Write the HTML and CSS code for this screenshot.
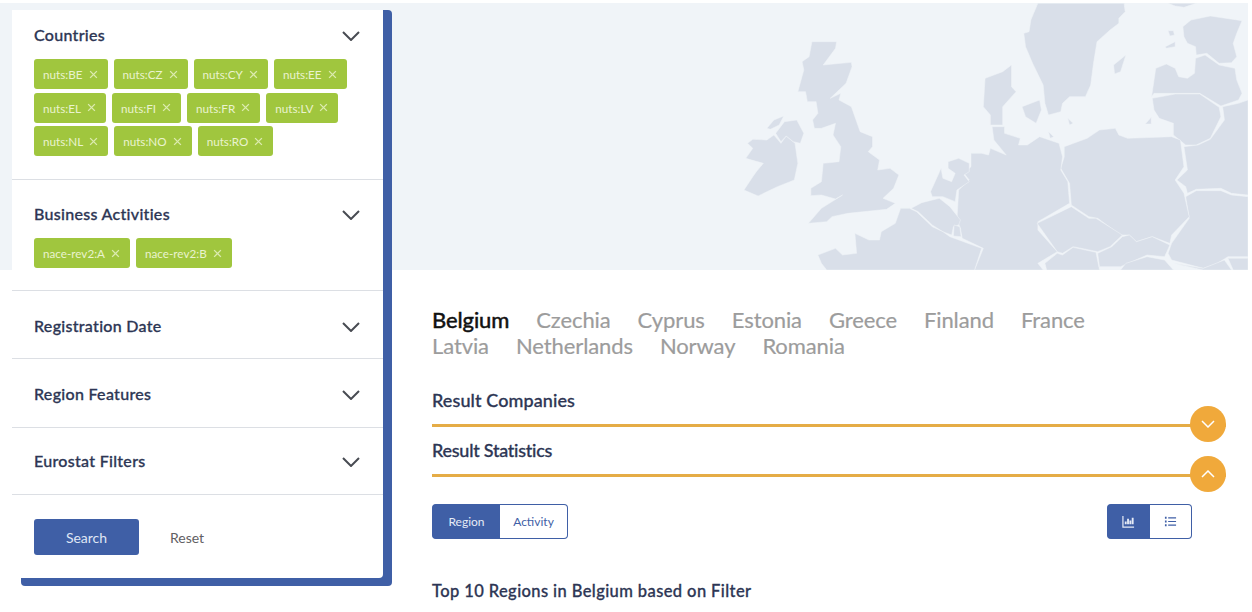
FILE: index.html

```html
<!DOCTYPE html>
<html lang="en">
<head>
  <meta charset="UTF-8" />
  <meta name="viewport" content="width=device-width, initial-scale=1.0" />
  <title>Company Search</title>
  <link rel="stylesheet" href="styles.css">
</head>
<body>
  <div class="page">
    <div class="hero">
      <svg class="map" viewBox="0 9 1557 801" preserveAspectRatio="none" aria-hidden="true">
        <g class="land">
          <polygon points="960,10 1205,10 1208,35 1190,55 1190,70 1165,90 1128,125 1118,190 1110,255 1095,290 1050,290 1030,310 1025,335 990,345 980,310 975,255 945,190 925,140 920,100 935,95 940,60" />
          <polygon points="1330,10 1410,10 1375,22 1350,18" />
          <polygon points="1372,80 1395,60 1450,48 1540,62 1525,100 1515,130 1525,170 1510,188 1475,190 1440,160 1410,165 1408,140 1385,130 1375,110" />
          <polygon points="1283,290 1295,205 1325,192 1350,205 1360,230 1385,235 1405,220 1408,175 1435,165 1475,195 1520,205 1525,240 1540,280 1530,300 1480,318 1420,280 1290,280" />
          <polygon points="1285,295 1350,282 1420,282 1475,322 1480,350 1450,415 1410,435 1380,435 1345,405 1345,370 1305,355 1290,330" />
          <polygon points="1557,300 1557,585 1510,580 1480,565 1410,568 1385,580 1380,560 1355,540 1385,510 1375,440 1415,435 1450,418 1490,360 1485,320 1530,310" />
          <polygon points="1557,590 1557,770 1500,770 1470,790 1430,805 1340,780 1330,760 1340,730 1390,655 1380,590 1410,572 1480,572 1510,585" />
          <polygon points="1035,440 1100,415 1135,390 1180,385 1190,405 1215,415 1340,410 1365,420 1375,500 1350,540 1375,580 1390,650 1340,705 1335,730 1285,710 1240,725 1220,705 1195,705 1130,655 1105,650 1055,615 1050,550 1025,505 1035,470" />
          <polygon points="770,460 800,460 820,465 825,445 870,465 835,420 830,380 865,380 865,400 910,415 905,435 930,435 965,410 1020,430 1030,470 1025,510 1045,545 1050,610 960,665 960,690 1015,755 960,790 975,810 780,810 805,745 745,715 740,685 730,660 735,570 765,540 750,520 770,500" />
          <polygon points="810,235 860,215 885,195 885,260 898,275 860,320 860,375 825,375 825,345 805,320" />
          <polygon points="915,320 965,300 970,330 955,370 925,350" />
          <polygon points="1045,355 1060,370 1050,375" />
          <polygon points="990,395 1005,410 995,415" />
          <polygon points="1265,372 1282,352 1282,372" />
          <polygon points="1175,195 1210,165 1195,215 1178,222" />
          <polygon points="1322,140 1350,125 1350,140 1325,145" />
          <polygon points="1330,92 1345,92 1348,105 1335,108" />
          <polygon points="655,575 685,505 690,535 715,545 725,520 705,505 705,485 735,475 765,490 765,515 750,525 765,545 730,570 725,605 690,590 660,590" />
          <polygon points="600,625 630,608 680,595 710,620 740,660 735,675 720,680 715,705 690,695 660,675 620,635" />
          <polygon points="722,675 738,680 742,710 720,708" />
          <polygon points="335,765 385,745 405,765 445,760 440,700 480,720 510,720 515,695 555,670 570,625 595,625 615,635 660,680 690,695 710,710 800,745 780,810 360,810 345,790" />
          <polygon points="958,670 1055,620 1105,655 1125,655 1200,705 1165,740 1130,755 1060,740 1030,760 1015,755" />
          <polygon points="1130,760 1170,740 1200,710 1220,705 1240,725 1285,710 1335,735 1320,770 1270,765 1195,800 1135,800" />
          <polygon points="980,790 1015,760 1030,765 1060,742 1125,757 1135,810 985,810" />
          <polygon points="1195,810 1210,790 1270,770 1320,780 1345,810" />
          <polygon points="1345,790 1430,810 1510,810 1490,780 1430,805" />
          <polygon points="1500,775 1557,775 1557,810 1515,810" />
          <polygon points="130,475 150,445 135,430 150,418 190,420 210,405 230,430 245,408 270,430 278,490 268,540 220,560 165,588 125,570 150,530 160,515 180,490" />
          <polygon points="215,400 240,365 275,360 295,400 285,430 265,425 245,408 230,425" />
          <polygon points="190,385 210,360 238,348 225,375 200,388" />
          <polygon points="318,125 388,125 385,145 350,195 430,187 432,200 415,250 370,295 400,280 395,300 430,320 445,365 455,395 490,410 490,440 478,455 510,480 505,510 540,505 565,525 550,565 520,595 555,610 530,628 420,640 375,650 360,665 308,670 345,625 405,585 385,597 345,585 315,587 315,565 345,545 350,490 395,485 400,440 378,405 385,370 345,385 325,385 320,360 335,340 330,305 305,305 300,275 278,275 295,210 290,185 310,170" />
        </g>
      </svg>
    </div>

    <aside class="panel-wrap">
      <div class="panel">
        <section class="filter filter-countries">
          <div class="filter-head">
            <h3>Countries</h3>
            <svg class="chev" viewBox="0 0 18 10"><path d="M1 1l8 8 8-8" /></svg>
          </div>
          <div class="tags">
            <span class="tag">nuts:BE <svg viewBox="0 0 8 8"><path d="M1 1l6 6M7 1l-6 6" /></svg></span>
            <span class="tag">nuts:CZ <svg viewBox="0 0 8 8"><path d="M1 1l6 6M7 1l-6 6" /></svg></span>
            <span class="tag">nuts:CY <svg viewBox="0 0 8 8"><path d="M1 1l6 6M7 1l-6 6" /></svg></span>
            <span class="tag">nuts:EE <svg viewBox="0 0 8 8"><path d="M1 1l6 6M7 1l-6 6" /></svg></span>
            <span class="tag">nuts:EL <svg viewBox="0 0 8 8"><path d="M1 1l6 6M7 1l-6 6" /></svg></span>
            <span class="tag">nuts:FI <svg viewBox="0 0 8 8"><path d="M1 1l6 6M7 1l-6 6" /></svg></span>
            <span class="tag">nuts:FR <svg viewBox="0 0 8 8"><path d="M1 1l6 6M7 1l-6 6" /></svg></span>
            <span class="tag">nuts:LV <svg viewBox="0 0 8 8"><path d="M1 1l6 6M7 1l-6 6" /></svg></span>
            <span class="tag">nuts:NL <svg viewBox="0 0 8 8"><path d="M1 1l6 6M7 1l-6 6" /></svg></span>
            <span class="tag">nuts:NO <svg viewBox="0 0 8 8"><path d="M1 1l6 6M7 1l-6 6" /></svg></span>
            <span class="tag">nuts:RO <svg viewBox="0 0 8 8"><path d="M1 1l6 6M7 1l-6 6" /></svg></span>
          </div>
        </section>
        <section class="filter filter-business">
          <div class="filter-head">
            <h3>Business Activities</h3>
            <svg class="chev" viewBox="0 0 18 10"><path d="M1 1l8 8 8-8" /></svg>
          </div>
          <div class="tags">
            <span class="tag">nace-rev2:A <svg viewBox="0 0 8 8"><path d="M1 1l6 6M7 1l-6 6" /></svg></span>
            <span class="tag">nace-rev2:B <svg viewBox="0 0 8 8"><path d="M1 1l6 6M7 1l-6 6" /></svg></span>
          </div>
        </section>
        <section class="filter filter-date">
          <div class="filter-head">
            <h3>Registration Date</h3>
            <svg class="chev" viewBox="0 0 18 10"><path d="M1 1l8 8 8-8" /></svg>
          </div>
        </section>
        <section class="filter filter-region">
          <div class="filter-head">
            <h3>Region Features</h3>
            <svg class="chev" viewBox="0 0 18 10"><path d="M1 1l8 8 8-8" /></svg>
          </div>
        </section>
        <section class="filter filter-eurostat">
          <div class="filter-head">
            <h3>Eurostat Filters</h3>
            <svg class="chev" viewBox="0 0 18 10"><path d="M1 1l8 8 8-8" /></svg>
          </div>
        </section>
        <div class="panel-foot">
          <button class="btn-search" type="button">Search</button>
          <button class="btn-reset" type="button">Reset</button>
        </div>
      </div>
    </aside>

    <main class="results">
      <nav class="tabs">
        <a class="tab active">Belgium</a>
        <a class="tab">Czechia</a>
        <a class="tab">Cyprus</a>
        <a class="tab">Estonia</a>
        <a class="tab">Greece</a>
        <a class="tab">Finland</a>
        <a class="tab">France</a>
        <a class="tab">Latvia</a>
        <a class="tab">Netherlands</a>
        <a class="tab">Norway</a>
        <a class="tab">Romania</a>
      </nav>

      <div class="result-head result-first">
        <h2>Result Companies</h2>
        <span class="round-btn">
          <svg viewBox="0 0 14 8"><path d="M1 1l6 6 6-6" /></svg>
        </span>
      </div>
      <div class="result-head result-stats">
        <h2>Result Statistics</h2>
        <span class="round-btn">
          <svg viewBox="0 0 14 8"><path d="M1 7l6-6 6 6" /></svg>
        </span>
      </div>

      <div class="controls">
        <div class="toggle">
          <button class="toggle-item on" type="button">Region</button>
          <button class="toggle-item" type="button">Activity</button>
        </div>
        <div class="toggle toggle-icons">
          <button class="toggle-item on" type="button">
            <svg viewBox="0 0 14 14"><path d="M1 1v12h12" /><path class="bars" d="M4 10V7M6.5 10V4M9 10V6M11.5 10V3" /></svg>
          </button>
          <button class="toggle-item" type="button">
            <svg viewBox="0 0 14 14"><path class="bars" d="M1 3h1.8M1 7h1.8M1 11h1.8" /><path d="M4.5 3H13M4.5 7H13M4.5 11H13" /></svg>
          </button>
        </div>
      </div>

      <h4 class="top-title">Top 10 Regions in Belgium based on Filter</h4>
    </main>
  </div>
</body>
</html>
```

FILE: styles.css

```css
body {
  margin: 0;
  font-family: 'Lato', 'Open Sans', sans-serif;
  background: #fff;
  color: #2d3654;
}
h2, h3, h4 {
  margin: 0;
}
button {
  font-family: inherit;
  border: none;
  cursor: pointer;
}
.page {
  display: grid;
  grid-template-columns: 392px 1fr;
  grid-template-rows: 267px auto;
  padding: 3px 4px 0 0;
}

/* map strip behind the panel */
.hero {
  grid-column: 1 / 3;
  grid-row: 1;
  background: #f0f4f8;
  display: flex;
  justify-content: flex-end;
  overflow: hidden;
}
.map {
  width: 548px;
  height: 267px;
}
.land polygon {
  fill: #d9dfe9;
  stroke: #f0f4f8;
  stroke-width: 1.5;
  stroke-linejoin: round;
}

/* filter panel */
.panel-wrap {
  grid-column: 1;
  grid-row: 1 / 3;
  align-self: start;
  margin: 7px 0 0 21px;
  background: #3f5fa6;
  border-radius: 4px;
}
.panel {
  width: 371px;
  margin: 0 0 8px -9px;
  background: #fff;
  border-radius: 0 0 4px 0;
}
.filter {
  padding: 22px 23px 21px 22px;
  border-bottom: 1px solid #dcdfe4;
}
.filter-countries {
  padding-top: 13px;
  padding-bottom: 23px;
}
.filter-business {
  padding-bottom: 22px;
}
.filter-date {
  padding-top: 23px;
  padding-bottom: 20px;
}
.filter-region {
  padding-top: 23px;
}
.filter-eurostat {
  padding-top: 21px;
}
.filter-head {
  display: flex;
  justify-content: space-between;
  align-items: center;
}
.filter-head h3 {
  font-size: 16px;
  line-height: 24px;
  font-weight: 500;
  letter-spacing: 0.3px;
  color: #2d3654;
  -webkit-text-stroke: 0.3px #2d3654;
}
.chev {
  width: 18px;
  height: 10px;
  margin-top: 2px;
  fill: none;
  stroke: #484b52;
  stroke-width: 2;
}
.tags {
  display: flex;
  flex-wrap: wrap;
  gap: 3.5px 6px;
  margin-top: 12px;
}
.tag {
  display: flex;
  align-items: center;
  gap: 6px;
  height: 30px;
  padding: 0 10px 0 9px;
  border-radius: 3px;
  background: #a0c63e;
  color: #eaf3cf;
  font-size: 11.7px;
}
.tag svg {
  width: 9px;
  height: 9px;
  fill: none;
  stroke: #dcebb0;
  stroke-width: 1.2;
}
.panel-foot {
  display: flex;
  align-items: center;
  padding: 24px 22px 23px;
}
.btn-search {
  width: 105px;
  height: 36px;
  border-radius: 3px;
  background: #3f5fa6;
  color: #dfe6f5;
  font-size: 14px;
}
.btn-reset {
  margin-left: 31px;
  padding: 0;
  background: none;
  color: #5f6063;
  font-size: 14px;
}

/* results column */
.results {
  grid-column: 2;
  grid-row: 2;
  padding: 37px 22px 0 40px;
}
.tabs {
  display: flex;
  flex-wrap: wrap;
  gap: 0 27px;
  max-width: 700px;
}
.tab {
  font-size: 22px;
  line-height: 26px;
  letter-spacing: -0.1px;
  color: #9c9c9c;
  -webkit-text-stroke: 0.2px #9c9c9c;
}
.tab.active {
  color: #111;
  -webkit-text-stroke: 0.5px #111;
}
.result-head {
  position: relative;
  margin-top: 11px;
  padding-bottom: 12px;
  border-bottom: 3px solid #e5ac46;
}
.result-first {
  margin-top: 29px;
}
.result-head h2 {
  font-size: 18px;
  line-height: 24px;
  font-weight: 500;
  letter-spacing: 0.1px;
  color: #2d3654;
  -webkit-text-stroke: 0.3px #2d3654;
}
.result-stats h2 {
  letter-spacing: -0.25px;
}
.round-btn {
  position: absolute;
  right: 0;
  bottom: -18px;
  width: 36px;
  height: 36px;
  border-radius: 50%;
  background: #f0a93b;
  display: flex;
  align-items: center;
  justify-content: center;
}
.round-btn svg {
  width: 14px;
  height: 8px;
  fill: none;
  stroke: #fff;
  stroke-width: 1.5;
}
.controls {
  display: flex;
  justify-content: space-between;
  margin-top: 27px;
  padding-right: 34px;
}
.toggle {
  display: flex;
  height: 35px;
}
.toggle-item {
  width: 68px;
  padding: 0;
  background: #fff;
  border: 1px solid #3f5fa6;
  color: #3f5fa6;
  font-size: 12px;
  display: flex;
  align-items: center;
  justify-content: center;
}
.toggle-item:first-child {
  border-radius: 4px 0 0 4px;
  border-right: none;
}
.toggle-item:last-child {
  border-radius: 0 4px 4px 0;
  border-left: none;
}
.toggle-item.on {
  background: #3f5fa6;
  color: #e6ebf6;
}
.toggle-icons .toggle-item {
  width: 42.5px;
}
.toggle-icons svg {
  width: 13px;
  height: 13px;
  fill: none;
  stroke: currentColor;
  stroke-width: 1.3;
}
.toggle-icons .bars {
  stroke-width: 2;
}
.top-title {
  margin-top: 41px;
  font-size: 16.5px;
  line-height: 22px;
  font-weight: 500;
  letter-spacing: 0.4px;
  color: #2d3654;
  -webkit-text-stroke: 0.3px #2d3654;
}
```
